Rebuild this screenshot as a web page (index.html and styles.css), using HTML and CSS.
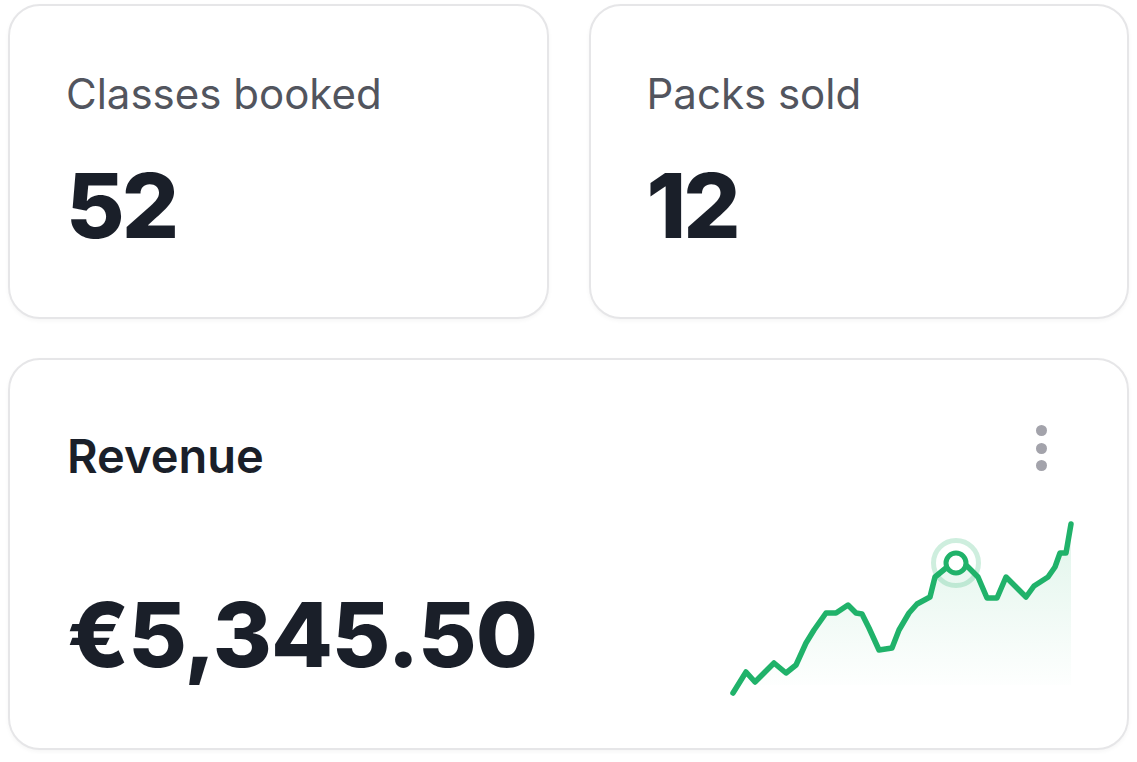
FILE: index.html
```html
<!DOCTYPE html>
<html lang="en">
<head>
    <meta charset="UTF-8">
    <meta name="viewport" content="width=device-width, initial-scale=1.0">
    <title>Studio stats</title>
    <link rel="stylesheet" href="styles.css">
</head>
<body>
    <div class="stats">
        <div class="card small">
            <div class="card-label">Classes booked</div>
            <div class="card-value">52</div>
        </div>
        <div class="card small">
            <div class="card-label">Packs sold</div>
            <div class="card-value">12</div>
        </div>
        <div class="card revenue">
            <div class="revenue-head">
                <div class="revenue-title">Revenue</div>
                <button class="menu" aria-label="More">
                    <span></span><span></span><span></span>
                </button>
            </div>
            <div class="revenue-body">
                <div class="card-value big">€5,345.50</div>
                <svg class="chart" width="350" height="190" viewBox="0 0 350 190">
                    <defs>
                        <linearGradient id="fade" x1="0" y1="0" x2="0" y2="1">
                            <stop offset="0" stop-color="#22b36b" stop-opacity="0.14"/>
                            <stop offset="1" stop-color="#22b36b" stop-opacity="0"/>
                        </linearGradient>
                    </defs>
                    <path fill="url(#fade)" d="M6 178 L19 157 L28 167 L47 148 L59 158 L69 150 L79 128 L87 115 L99 98 L109 98 L121 90 L129 98 L135 99 L142 113 L152 135 L165 133 L172 115 L182 98 L190 89 L203 82 L208 62 L219 53 L227 48 L240 51 L251 62 L260 83 L270 83 L279 62 L289 72 L299 82 L307 71 L321 62 L328 52 L333 38 L339 38 L344 9 L344 170 L6 170 Z"/>
                    <polyline fill="none" stroke="#20b26a" stroke-width="5.5" stroke-linejoin="round" stroke-linecap="round" points="6,178 19,157 28,167 47,148 59,158 69,150 79,128 87,115 99,98 109,98 121,90 129,98 135,99 142,113 152,135 165,133 172,115 182,98 190,89 203,82 208,62 219,53 227,48 240,51 251,62 260,83 270,83 279,62 289,72 299,82 307,71 321,62 328,52 333,38 339,38 344,9"/>
                    <circle cx="229" cy="48" r="22.5" fill="none" stroke="#20b26a" stroke-opacity="0.22" stroke-width="5"/>
                    <circle cx="229" cy="48" r="10" fill="#fff" stroke="#20b26a" stroke-width="5"/>
                </svg>
            </div>
        </div>
    </div>
</body>
</html>
```

FILE: styles.css
```css
body {
    margin: 0;
    background-color: #ffffff;
    font-family: Inter, "Noto Sans", sans-serif;
    color: #1a1f29;
}

.stats {
    display: grid;
    grid-template-columns: 1fr 1fr;
    column-gap: 40px;
    row-gap: 39px;
    padding: 4px 8px;
}

.card {
    background-color: #ffffff;
    border: 2px solid #e6e6e8;
    border-radius: 32px;
    box-shadow: 0 2px 4px rgba(0, 0, 0, 0.04);
    box-sizing: border-box;
}

.small {
    height: 315px;
    padding: 64px 56px 0;
}

.card-label {
    font-size: 42px;
    color: #52555e;
    line-height: 48px;
}

.card-value {
    font-size: 90px;
    font-weight: 800;
    line-height: 1;
    margin-top: 43px;
    letter-spacing: -3px;
}

.revenue {
    grid-column: 1 / 3;
    height: 392px;
    padding: 68px 52px 43px 57px;
    display: flex;
    flex-direction: column;
    justify-content: space-between;
}

.revenue-head {
    display: flex;
    justify-content: space-between;
    align-items: flex-start;
}

.revenue-title {
    font-size: 47px;
    font-weight: 600;
    line-height: 56px;
}

.menu {
    display: flex;
    flex-direction: column;
    gap: 6.5px;
    background: none;
    border: none;
    padding: 0;
    margin: -3px 28px 0 0;
}

.menu span {
    width: 11px;
    height: 11px;
    border-radius: 50%;
    background-color: #a3a3ab;
}

.revenue-body {
    display: flex;
    justify-content: space-between;
    align-items: flex-end;
}

.card-value.big {
    letter-spacing: -1px;
    margin: 0 0 25px;
}

.chart {
    display: block;
    margin-right: -2px;
}
```
